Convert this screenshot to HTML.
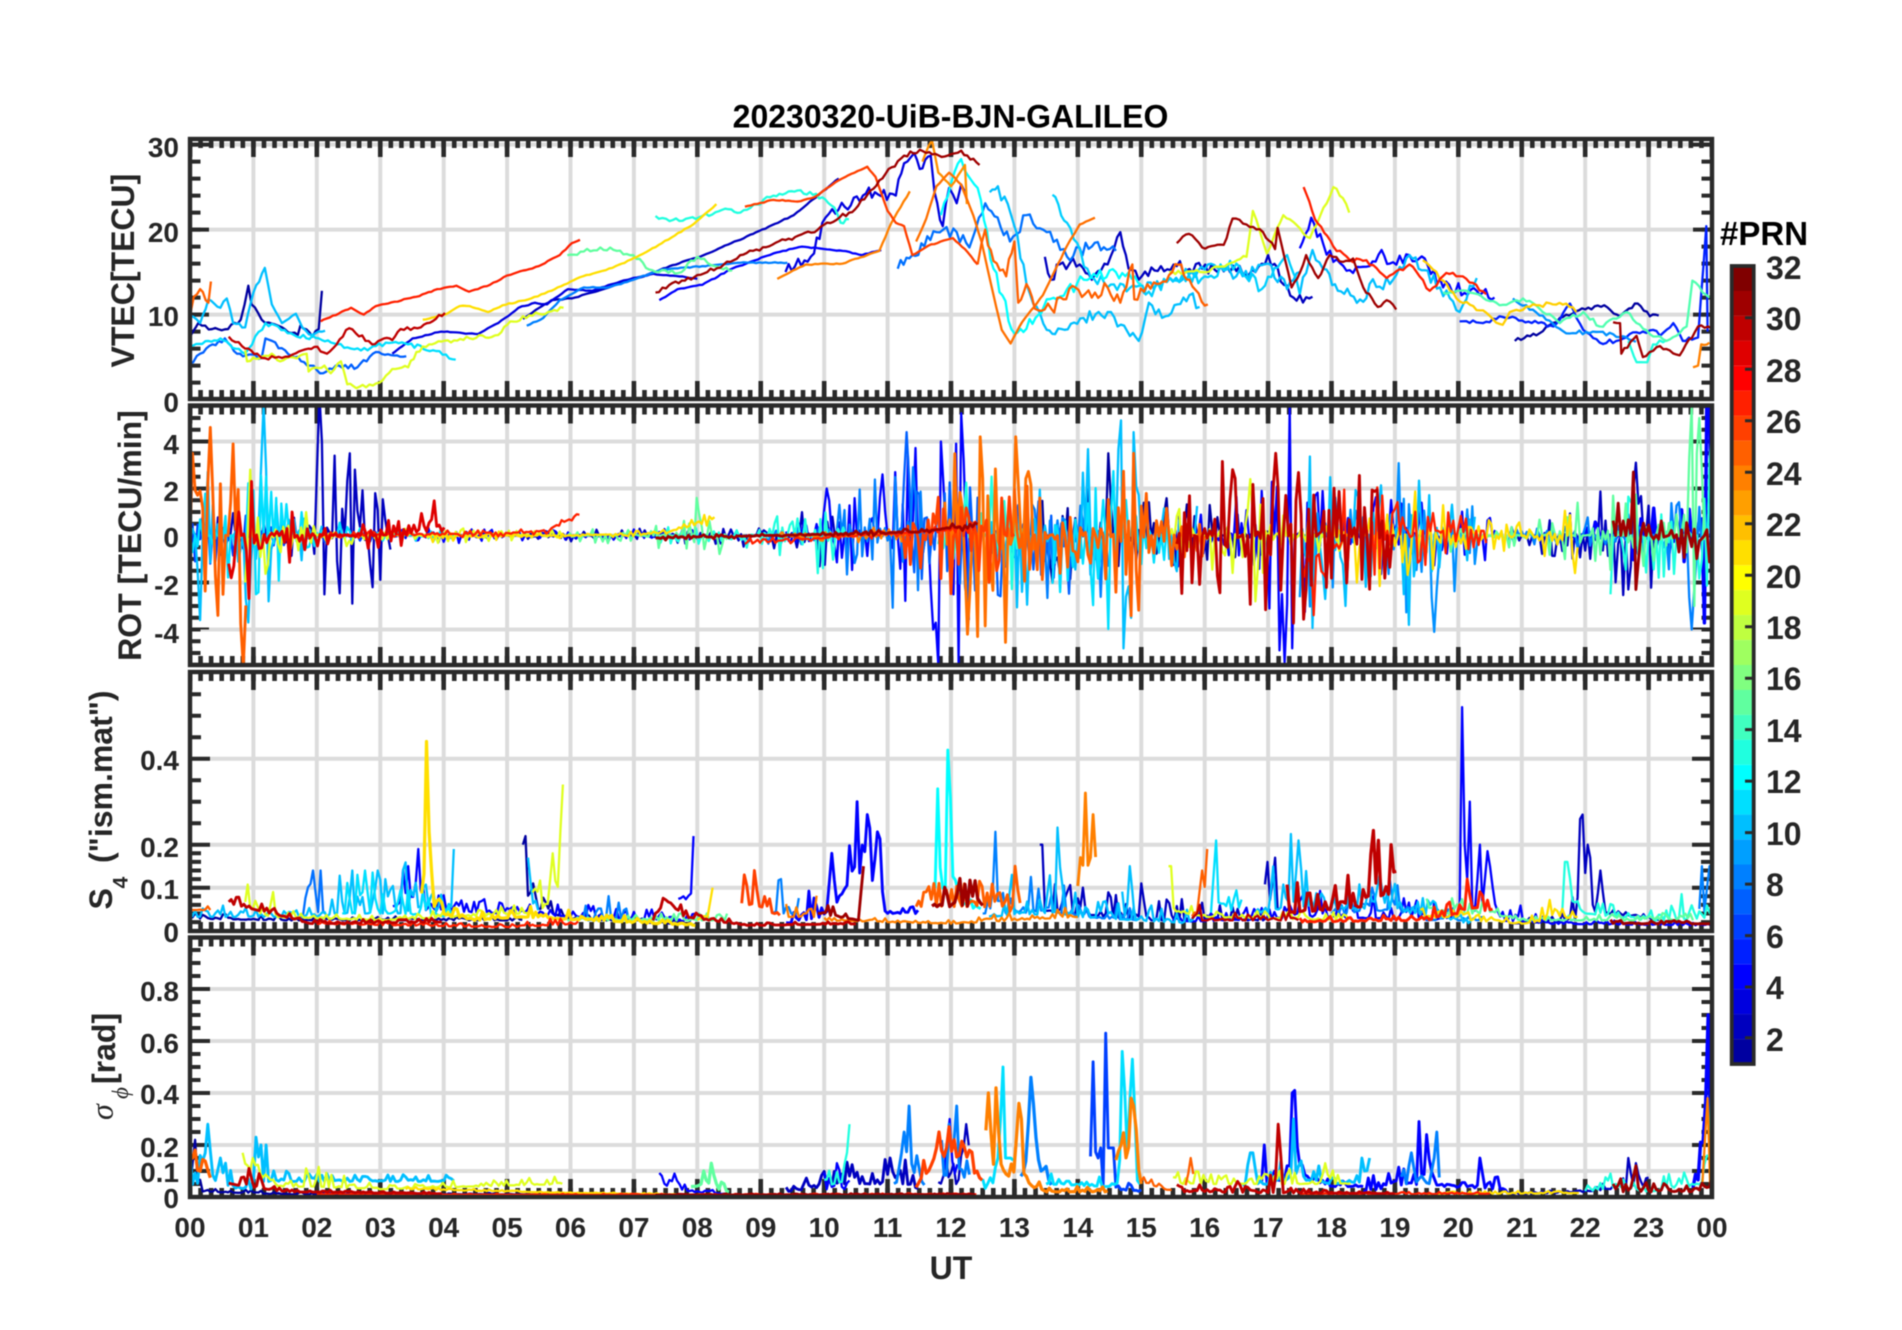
<!DOCTYPE html>
<html><head><meta charset="utf-8"><title>20230320-UiB-BJN-GALILEO</title>
<style>
html,body{margin:0;padding:0;background:#fff;width:1902px;height:1330px;overflow:hidden}
svg{display:block;filter:blur(.45px)}
text{font-family:"Liberation Sans",sans-serif;font-weight:bold;fill:#262626}
.t text,.t{font-size:28px}
.l{font-size:32px}
#v polyline{fill:none;stroke-width:2.3;vector-effect:non-scaling-stroke;stroke-linejoin:round}
.tr{fill:none;stroke-linejoin:round}
.gr{stroke:#dcdcdc;stroke-width:4;fill:none}
.tk{stroke:#2a2a2a;fill:none}
.fr{stroke:#2a2a2a;stroke-width:4.4;fill:none}
</style></head><body>
<svg xmlns="http://www.w3.org/2000/svg" width="1902" height="1330" viewBox="0 0 1902 1330">
<defs>
<clipPath id="c1"><rect x="190" y="139" width="1522" height="260"/></clipPath>
<clipPath id="c2"><rect x="190" y="405.5" width="1522" height="259.5"/></clipPath>
<clipPath id="c3"><rect x="190" y="672" width="1522" height="259"/></clipPath>
<clipPath id="c4"><rect x="190" y="937.5" width="1522" height="259.5"/></clipPath>
</defs>

<!-- grid -->
<g class="gr">
<path d="M253.4 139V399M316.8 139V399M380.3 139V399M443.7 139V399M507.1 139V399M570.5 139V399M633.9 139V399M697.3 139V399M760.8 139V399M824.2 139V399M887.6 139V399M951 139V399M1014.4 139V399M1077.8 139V399M1141.3 139V399M1204.7 139V399M1268.1 139V399M1331.5 139V399M1394.9 139V399M1458.3 139V399M1521.8 139V399M1585.2 139V399M1648.6 139V399"/>
<path d="M253.4 405V665M316.8 405V665M380.3 405V665M443.7 405V665M507.1 405V665M570.5 405V665M633.9 405V665M697.3 405V665M760.8 405V665M824.2 405V665M887.6 405V665M951 405V665M1014.4 405V665M1077.8 405V665M1141.3 405V665M1204.7 405V665M1268.1 405V665M1331.5 405V665M1394.9 405V665M1458.3 405V665M1521.8 405V665M1585.2 405V665M1648.6 405V665"/>
<path d="M253.4 672V931M316.8 672V931M380.3 672V931M443.7 672V931M507.1 672V931M570.5 672V931M633.9 672V931M697.3 672V931M760.8 672V931M824.2 672V931M887.6 672V931M951 672V931M1014.4 672V931M1077.8 672V931M1141.3 672V931M1204.7 672V931M1268.1 672V931M1331.5 672V931M1394.9 672V931M1458.3 672V931M1521.8 672V931M1585.2 672V931M1648.6 672V931"/>
<path d="M253.4 937V1197M316.8 937V1197M380.3 937V1197M443.7 937V1197M507.1 937V1197M570.5 937V1197M633.9 937V1197M697.3 937V1197M760.8 937V1197M824.2 937V1197M887.6 937V1197M951 937V1197M1014.4 937V1197M1077.8 937V1197M1141.3 937V1197M1204.7 937V1197M1268.1 937V1197M1331.5 937V1197M1394.9 937V1197M1458.3 937V1197M1521.8 937V1197M1585.2 937V1197M1648.6 937V1197"/>
<path d="M190 144.6H1712M190 229.6H1712M190 314.6H1712"/>
<path d="M190 441.5H1712M190 488.5H1712M190 535.5H1712M190 582.5H1712M190 629.5H1712"/>
<path d="M190 758.7H1712M190 844.7H1712M190 887.7H1712"/>
<path d="M190 989H1712M190 1041H1712M190 1093H1712M190 1145H1712M190 1171H1712"/>
</g>

<!-- x ticks -->
<g class="tk">
<g stroke-dasharray="4.6 5.9694" stroke-dashoffset="2.3" stroke-width="9">
<path d="M190 143.5H1714M190 394.5H1714M190 410H1714M190 660.5H1714M190 676.5H1714M190 926.5H1714M190 942H1714M190 1192.5H1714"/>
</g>
<g stroke-dasharray="4.6 58.8167" stroke-dashoffset="2.3" stroke-width="18">
<path d="M190 148H1714M190 390H1714M190 414.5H1714M190 656H1714M190 681H1714M190 1188H1714M190 946.5H1714"/>
</g>
<!-- y ticks -->
<g stroke-dasharray="4 13" stroke-dashoffset="2" stroke-width="9">
<path d="M196 399.6V139M1706 399.6V139"/>
</g>
<g stroke-dasharray="4 81" stroke-dashoffset="2" stroke-width="18">
<path d="M200 399.6V139M1702 399.6V139"/>
</g>
<g stroke-dasharray="4 7.75" stroke-dashoffset="2" stroke-width="9">
<path d="M196 664.75V405.5M1706 664.75V405.5"/>
</g>
<g stroke-dasharray="4 43" stroke-dashoffset="2" stroke-width="18">
<path d="M200 629.5V405.5M1702 629.5V405.5"/>
</g>
<g stroke-width="4">
<path d="M192 922.1h9M192 913.5h9M192 904.9h9M192 896.3h9M192 879.1h9M192 870.5h9M192 861.9h9M192 853.3h9M192 823.2h9M192 801.7h9M192 780.2h9M192 737.2h9M192 715.7h9M192 694.2h9"/>
<path d="M1710 922.1h-9M1710 913.5h-9M1710 904.9h-9M1710 896.3h-9M1710 879.1h-9M1710 870.5h-9M1710 861.9h-9M1710 853.3h-9M1710 823.2h-9M1710 801.7h-9M1710 780.2h-9M1710 737.2h-9M1710 715.7h-9M1710 694.2h-9"/>
<path d="M192 887.7h18M192 844.7h18M192 758.7h18M1710 887.7h-18M1710 844.7h-18M1710 758.7h-18"/>
<path d="M192 989h18M192 1041h18M192 1093h18M192 1145h18M192 1171h18M1710 989h-18M1710 1041h-18M1710 1093h-18M1710 1145h-18M1710 1171h-18"/>
</g>
<g stroke-dasharray="4 9" stroke-dashoffset="2" stroke-width="9">
<path d="M196 1197V937.5M1706 1197V937.5"/>
</g>
</g>

<!-- VTEC traces (hours, TECU) -->
<g clip-path="url(#c1)">
<g id="v" transform="translate(190,399.6) scale(63.417,-8.5)">
<polyline class="a" stroke="#0000a0" points="0,7.4 .13,9 .35,8.3 .6,8.3 .8,9.4 .92,13.4 .97,11.2 1.13,9.4 1.45,8.5 1.7,7.6 1.74,8.7 1.93,7.4 2.03,8.3 2.08,12.8"/>
<polyline class="b" stroke="#0000bf" points="5.25,9.5 5.7,11.7 6.02,11.9 6.34,12.6 7.11,14.4 7.76,16.2 8.04,16.8 8.88,19.5 9.52,21.7 10.23,26"/>
<polyline class="a" stroke="#0000a0" points="20.89,6.9 21.28,7.8 21.6,9.6 21.9,10.5 22.3,11.1 22.55,9.8 22.83,11.3 23.02,9.8 23.16,9.9"/>
<polyline class="c" stroke="#0000bf" points="13.48,16.8 13.58,14.1 13.71,15.9 14.03,15.9 14.22,14.1 14.47,15.9 14.67,19.7 14.8,15.4 14.96,14.1 15.31,15.7 15.56,15.7 15.96,15.4 16.4,15 16.8,15 17,17 17.25,13.5 17.4,12 17.7,12.1"/>
<polyline class="b" stroke="#0000df" points="3.19,5.4 3.51,7.2 3.96,8 4.54,7.7 4.86,9 5.18,10.8 5.44,11.4 5.63,11.2 5.96,13 6.34,12.8 6.79,13.9 7.31,14.8 7.82,14.4 8,14.2"/>
<polyline class="c" stroke="#0000df" points="9.39,15 9.84,17.2 9.97,20.8 10.23,22.4 10.61,24 10.8,24.4 11.13,24 11.26,27.8 11.42,29 11.55,27.2 11.68,28.7 11.74,24.4 11.87,20.4 11.97,24.9 12.09,23.1 12.16,25.3 12.25,23.5"/>
<polyline class="b" stroke="#0000ff" points="7.4,11.7 7.69,13 8.08,13.5 8.52,15.3 9.2,17.2 9.65,18 10.29,17.5 10.6,17 10.9,17.6"/>
<polyline class="c" stroke="#0000ff" points="17.5,17.8 17.68,21.4 17.87,18.3 18.03,16.2 18.34,14.9 18.6,15.7 18.79,17.6 18.92,16 19.23,17 19.47,16.6 19.76,13.2 20.29,12.8 20.57,12"/>
<polyline class="a" stroke="#0020ff" points="20.02,9.2 20.39,9 20.65,9.8 21.26,9 21.5,8.6 21.76,11.3 21.97,8.2 22.23,6.7 22.49,6.9 22.7,7.7 23.07,8.2 23.18,7.5 23.39,9 23.54,6.9 23.78,7.3 23.91,20.4 23.93,8"/>
<polyline class="a" stroke="#0060ff" points="0,4.2 .16,5.4 .55,7.2 .74,5.4 1.13,4.9 1.19,7.2 1.5,5.8 1.9,4 2.1,3.1 2.35,4 2.64,3.8 2.93,5.6 3.41,5.1"/>
<polyline class="c" stroke="#0070ff" points="11.16,15.4 11.39,17 11.77,19.7 12.09,19.7 12.29,17.9 12.54,23.1 12.93,18.6 13.19,21.7 13.51,19.7 13.83,16.8 14.22,18 14.6,17.5"/>
<polyline class="b" stroke="#0080ff" points="5.31,8.7 5.57,9.6 5.83,11.7 6.21,13.2 6.6,13.2 6.99,14.1 7.44,15.3 8.08,15.7 8.68,16.1 9.42,16.1"/>
<polyline class="a" stroke="#0090ff" points="20.86,11.9 21.28,9.9 21.7,7.8 22.12,8 22.44,7.7 22.8,6.8"/>
<polyline class="a" stroke="#00bfff" points="0,9.9 .16,9 .29,11.8 .48,10.8 .58,11.9 .68,9 .87,8.5 1,12.6 1.18,15.5 1.29,11.2 1.45,9 1.67,10.1 1.77,8.5 1.93,7.6 2.13,8.1"/>
<polyline class="c" stroke="#00bfff" points="12.61,24.4 12.74,25.1 13,20.4 13.19,13.6 13.51,8.2 13.64,7.7 14.09,9.6 14.47,10.3 14.73,8.7 14.96,6.9 15.12,11.4 15.38,9.8 15.76,12.3 15.92,10.9"/>
<polyline class="c" stroke="#00bfff" points="15,13 15.4,14 15.8,15 16.2,15.5 16.6,14.5 17,16 17.3,13 17.5,15"/>
<polyline class="c" stroke="#00bfff" points="17.5,12.4 17.7,17.6 17.92,15.3 18.1,12.8 18.5,11.5 18.6,13.6 18.92,13.6 19.23,17 19.71,13.2 20.02,10.3 20.29,14.3"/>
<polyline class="c" stroke="#00cfff" points="13.6,24.1 13.83,20.8 14.15,15.4 14.47,13.2 15.12,12.7 15.5,14 16,14.5 16.5,16 16.9,13 17.3,17 17.5,12.4"/>
<polyline class="a" stroke="#00dfff" points="0,6.3 .29,6.9 .48,7.2 .87,5.4 1.19,9 1.64,7.6 2.03,7.2 2.32,6.5 2.54,6 2.8,5.8 2.93,6.3 3.19,6.7 3.44,6.5 3.83,5.8 4.19,4.7"/>
<polyline class="c" stroke="#00ffff" points="11.84,21.7 12.16,28.3 12.42,24.9 12.67,15.4 13,7.8 13.38,10 13.51,11.8 13.83,13 14.2,14.3 14.6,15 15,13.5"/>
<polyline class="a" stroke="#20ffdf" points="7.34,21.6 7.56,21 8.08,21.6 8.49,22.4 8.68,22 9.2,24 9.58,24.6 9.97,23.8 10.16,22.6 10.26,20.8 10.39,21.2"/>
<polyline class="a" stroke="#20ffdf" points="22.68,6.9 22.81,4.4 22.98,4.4 23.07,6.5 23.28,7"/>
<polyline class="a" stroke="#60ff9f" points="5.95,17 6.47,17.9 6.73,17.5 6.99,17 7.24,15.3 7.7,14.9 8,16.8 8.27,15.7 8.55,15.2"/>
<polyline class="a" stroke="#50ffb0" points="19.76,12.6 20.13,12.8 20.65,11.1 21.02,11.9 21.28,10.7 21.6,9 21.97,10.3 22.23,8.6 22.65,10.3 23.02,7.7 23.28,6.9 23.6,8.6 23.69,14 23.96,12"/>
<polyline class="a" stroke="#dfff20" points=".87,5.8 .9,4.5 1.29,5.4 1.42,4.5 1.84,5.4 1.87,3.3 2.12,4 2.22,3.1 2.38,4.5 2.48,1.8 2.67,1.5 2.99,2 3.19,3.6 3.44,3.8 3.57,5.6 3.77,6.5 4.41,7.2 4.86,7.6 5.05,9.2 5.5,10.1 5.89,10.8"/>
<polyline class="a" stroke="#dfff20" points="15.44,15 16.02,15 16.66,16.8 16.76,22.2 16.98,17.2 17.24,21.7 17.66,19 17.82,21.6 18.03,25 18.18,23.7 18.28,22"/>
<polyline class="b" stroke="#ffdf00" points="3.67,9.4 4.02,10 4.25,11 4.41,11 4.7,10.3 4.93,11.1 5.38,11.9 5.7,12.8 6.15,14.4 6.66,15.5 7.05,16.8 7.44,18.4 7.95,20.7 8.3,23"/>
<polyline class="a" stroke="#ffcf00" points="19.44,16.4 19.76,14 19.97,11.9 20.34,10.5 20.7,8.8 20.81,10.3 21.23,11.1 21.7,11.3 21.86,10.3"/>
<polyline class="a" stroke="#ff9000" points="11.55,28 11.7,30.5 11.8,26.7 12,25.1 12.22,27.6 12.25,23"/>
<polyline class="b" stroke="#ff8000" points="9.26,14.2 9.71,15.9 10.29,16 10.87,17.5 11.06,20.8 11.35,24.5"/>
<polyline class="b" stroke="#ff7000" points="11.45,18.6 11.61,21.3 11.77,25.1 11.97,26.7 12.16,25.3 12.35,21.7 12.48,18.6 12.67,12.3 12.8,8.2 12.94,6.6 13.12,9.1 13.45,12.3 13.83,18.1 14.03,20.6 14.27,21.4"/>
<polyline class="a" stroke="#ff8000" points="23.7,3.8 23.78,4 23.83,6.5 23.96,6.7"/>
<polyline class="c" stroke="#ff6000" points="12.42,15.9 12.54,20 12.67,16.3 12.87,14.5 13,18.6 13.06,11.4 13.19,13.6 13.32,10.7 13.58,10.7 13.77,11.8 13.96,13.2 14.22,12 14.47,13.2 14.67,11.4 14.86,15.9 14.89,11.8 15.25,13.6 15.63,15.9 15.76,14.1 16.05,11.2"/>
<polyline class="a" stroke="#ff6000" points="0,9.9 .06,12.1 .16,13 .29,11.4 .33,13.9"/>
<polyline class="b" stroke="#ff4000" points="8.75,22.7 9.2,23.5 9.58,23.3 9.84,23.8 10.23,25.8 10.68,27.4 10.81,26.2 11,22.2 11.13,20.8 11.26,20.4 11.39,17 11.64,18.1 12.03,19 12.22,17.7 12.42,15.9"/>
<polyline class="b" stroke="#ff2000" points="2.06,9.2 2.54,10.8 2.74,10 2.93,11 3.57,12.1 3.9,13 4.2,13.4 4.4,12.7 4.73,13.5 5,14.6 5.5,15.7 5.83,17 6.02,18.4 6.15,18.8"/>
<polyline class="a" stroke="#ff2000" points="17.56,25 17.74,21.2 18.03,18 18.29,16.4 18.55,16.4 18.87,14.3 19.23,15.9 19.55,12.8 19.81,14.9 20.07,14.5 20.44,12.4"/>
<polyline class="a" stroke="#bf0000" points=".61,7.4 .87,6 1.06,5.4 1.13,4.9 1.45,4.9 1.77,5.8 1.96,6.2 2.16,5.4 2.51,8.4 2.87,6.5 3.06,7.2 3.19,7 3.32,8.3 3.64,8.5 4.02,10.2"/>
<polyline class="a" stroke="#9f0000" points="7.34,12.6 7.56,13.5 7.95,14.4 8.52,16.2 8.88,17.5 9.9,20 10.49,22.4 10.87,25.8 11.26,28.7 11.51,29.4 11.9,28.6 12.16,29.3 12.45,27.6"/>
<polyline class="a" stroke="#9f0000" points="15.56,18.4 15.75,19.5 15.96,17.9 16.3,18.2 16.44,21.3 16.66,20.6 16.92,19.7 17.11,17.7 17.15,20.2 17.37,13.2 17.5,14.9 17.6,17 17.79,14.3 17.97,17 18.18,16.2 18.34,16.6 18.5,13.2 18.73,10.9 18.87,11.7 19.02,10.6"/>
<polyline class="a" stroke="#9f0000" points="22.44,9.1 22.55,9 22.57,5.4 22.81,7.5 22.91,5 23.18,6.3 23.49,5.2 23.78,8.6 23.99,8.4"/>
</g></g>

<g id="p2" clip-path="url(#c2)"></g>
<g id="p3" clip-path="url(#c3)"></g>
<g id="p4" clip-path="url(#c4)"></g>

<!-- frames -->
<rect class="fr" x="190" y="139" width="1522" height="260"/>
<rect class="fr" x="190" y="405.5" width="1522" height="259.5"/>
<rect class="fr" x="190" y="672" width="1522" height="259"/>
<rect class="fr" x="190" y="937.5" width="1522" height="259.5"/>

<!-- y tick labels -->
<g class="t" text-anchor="end">
<text x="179" y="157">30</text><text x="179" y="242">20</text><text x="179" y="326">10</text><text x="179" y="412">0</text>
<text x="179" y="454">4</text><text x="179" y="501">2</text><text x="179" y="547">0</text><text x="179" y="595">-2</text><text x="179" y="643">-4</text>
<text x="179" y="770">0.4</text><text x="179" y="857">0.2</text><text x="179" y="899">0.1</text><text x="179" y="942">0</text>
<text x="179" y="1001">0.8</text><text x="179" y="1053">0.6</text><text x="179" y="1104">0.4</text><text x="179" y="1157">0.2</text><text x="179" y="1182">0.1</text><text x="179" y="1208">0</text>
</g>
<!-- x tick labels -->
<g class="t" text-anchor="middle">
<text x="190" y="1237">00</text><text x="253.4" y="1237">01</text><text x="316.8" y="1237">02</text><text x="380.3" y="1237">03</text><text x="443.7" y="1237">04</text><text x="507.1" y="1237">05</text><text x="570.5" y="1237">06</text><text x="633.9" y="1237">07</text><text x="697.3" y="1237">08</text><text x="760.8" y="1237">09</text><text x="824.2" y="1237">10</text><text x="887.6" y="1237">11</text><text x="951" y="1237">12</text><text x="1014.4" y="1237">13</text><text x="1077.8" y="1237">14</text><text x="1141.3" y="1237">15</text><text x="1204.7" y="1237">16</text><text x="1268.1" y="1237">17</text><text x="1331.5" y="1237">18</text><text x="1394.9" y="1237">19</text><text x="1458.3" y="1237">20</text><text x="1521.8" y="1237">21</text><text x="1585.2" y="1237">22</text><text x="1648.6" y="1237">23</text><text x="1712" y="1237">00</text>
</g>
<text class="l" x="951" y="1279" text-anchor="middle">UT</text>
<text x="950.5" y="127.5" text-anchor="middle" font-size="32" style="fill:#000">20230320-UiB-BJN-GALILEO</text>

<!-- axis labels -->
<text class="l" transform="translate(134,270.6) rotate(-90)" text-anchor="middle">VTEC[TECU]</text>
<text class="l" transform="translate(141,535.5) rotate(-90)" text-anchor="middle">ROT [TECU/min]</text>
<text class="l" transform="translate(112,909.5) rotate(-90)">S</text>
<text transform="translate(127.5,888.5) rotate(-90)" font-size="21">4</text>
<text class="l" transform="translate(112,863) rotate(-90)">("ism.mat")</text>
<text class="l" transform="translate(115,1084) rotate(-90)">[rad]</text>
<text transform="translate(112.5,1120) rotate(-90)" font-size="32" style='font-family:"Liberation Serif",serif;font-style:italic;font-weight:normal'>σ</text>
<text transform="translate(128,1099) rotate(-90)" font-size="23" style='font-family:"Liberation Serif",serif;font-style:italic;font-weight:normal'>ϕ</text>

<!-- colorbar -->
<g>
<rect x="1731" y="266.0" width="23" height="25" fill="#800000"/><rect x="1731" y="290.9" width="23" height="25" fill="#9f0000"/><rect x="1731" y="315.9" width="23" height="25" fill="#bf0000"/><rect x="1731" y="340.8" width="23" height="25" fill="#df0000"/><rect x="1731" y="365.8" width="23" height="25" fill="#ff0000"/><rect x="1731" y="390.7" width="23" height="25" fill="#ff2000"/><rect x="1731" y="415.6" width="23" height="25" fill="#ff4000"/><rect x="1731" y="440.6" width="23" height="25" fill="#ff6000"/><rect x="1731" y="465.5" width="23" height="25" fill="#ff8000"/><rect x="1731" y="490.4" width="23" height="25" fill="#ff9f00"/><rect x="1731" y="515.4" width="23" height="25" fill="#ffbf00"/><rect x="1731" y="540.3" width="23" height="25" fill="#ffdf00"/><rect x="1731" y="565.3" width="23" height="25" fill="#ffff00"/><rect x="1731" y="590.2" width="23" height="25" fill="#dfff20"/><rect x="1731" y="615.1" width="23" height="25" fill="#bfff40"/><rect x="1731" y="640.1" width="23" height="25" fill="#9fff60"/><rect x="1731" y="665" width="23" height="25" fill="#80ff80"/><rect x="1731" y="689.9" width="23" height="25" fill="#60ff9f"/><rect x="1731" y="714.9" width="23" height="25" fill="#40ffbf"/><rect x="1731" y="739.8" width="23" height="25" fill="#20ffdf"/><rect x="1731" y="764.8" width="23" height="25" fill="#00ffff"/><rect x="1731" y="789.7" width="23" height="25" fill="#00dfff"/><rect x="1731" y="814.6" width="23" height="25" fill="#00bfff"/><rect x="1731" y="839.6" width="23" height="25" fill="#009fff"/><rect x="1731" y="864.5" width="23" height="25" fill="#0080ff"/><rect x="1731" y="889.4" width="23" height="25" fill="#0060ff"/><rect x="1731" y="914.4" width="23" height="25" fill="#0040ff"/><rect x="1731" y="939.3" width="23" height="25" fill="#0020ff"/><rect x="1731" y="964.3" width="23" height="25" fill="#0000ff"/><rect x="1731" y="989.2" width="23" height="25" fill="#0000df"/><rect x="1731" y="1014.1" width="23" height="25" fill="#0000bf"/><rect x="1731" y="1039.1" width="23" height="25" fill="#0000a0"/>
<path class="tk" stroke-width="3" d="M1745 317.8h8M1745 369.3h8M1745 420.8h8M1745 472.2h8M1745 523.7h8M1745 575.2h8M1745 626.7h8M1745 678.2h8M1745 729.6h8M1745 781.1h8M1745 832.6h8M1745 884.1h8M1745 935.6h8M1745 987h8M1745 1037.8h8"/>
<rect x="1731.7" y="266" width="22" height="798" fill="none" stroke="#2a2a2a" stroke-width="3.8"/>
</g>
<g font-size="32">
<text x="1766" y="279" font-size="32">32</text><text x="1766" y="330" font-size="32">30</text><text x="1766" y="382" font-size="32">28</text><text x="1766" y="433" font-size="32">26</text><text x="1766" y="485" font-size="32">24</text><text x="1766" y="536" font-size="32">22</text><text x="1766" y="588" font-size="32">20</text><text x="1766" y="639" font-size="32">18</text><text x="1766" y="690" font-size="32">16</text><text x="1766" y="742" font-size="32">14</text><text x="1766" y="793" font-size="32">12</text><text x="1766" y="845" font-size="32">10</text><text x="1766" y="896" font-size="32">8</text><text x="1766" y="948" font-size="32">6</text><text x="1766" y="999" font-size="32">4</text><text x="1766" y="1051" font-size="32">2</text>
</g>
<text x="1720" y="245" font-size="33" style="fill:#000">#PRN</text>
</svg>
<script>
(function(){
var seed=20230320;function R(){seed=(seed*1664525+1013904223)>>>0;return seed/4294967296;}
var NS="http://www.w3.org/2000/svg";
function X(t){return 190+t*63.417;}
function K(k,t,i){var n=k.length;if(t<=k[0][0])return k[0][i];for(var j=0;j<n-1;j++){if(t<=k[j+1][0]){var f=(t-k[j][0])/(k[j+1][0]-k[j][0]);return k[j][i]+f*(k[j+1][i]-k[j][i]);}}return k[n-1][i];}
function add(p,c,pts,w){var e=document.createElementNS(NS,"polyline");e.setAttribute("points",pts.join(" "));e.setAttribute("stroke",c);e.setAttribute("stroke-width",(w||2)*1.15);e.setAttribute("class","tr");document.getElementById(p).appendChild(e);}
var dt=.04;
function spikeval(sp,t,v,sh){if(!sp)return v;for(var i=0;i<sp.length;i++){var d=Math.abs(t-sp[i][0]);if(d<dt/2)return sp[i][1];if(d<dt*1.5&&R()<.5)v=sp[i][1]*.55+v*.3;else if(sh&&d<dt*3&&R()<.6)v=Math.max(v,sp[i][1]*.3);}return v;}
/* ROT: knots [t,amp,bias] */
function r(c,k,sp,w){var pts=[],s=1,a0=k[0][0],a1=k[k.length-1][0];for(var t=a0;t<=a1;t+=dt){var a=K(k,t,1),b=k[0].length>2?K(k,t,2):0,u=R();if(R()<.75)s=-s;var v=b+a*s*Math.pow(u,2.7);v=spikeval(sp,t,v);pts.push(X(t).toFixed(1)+","+(535.5-v*23.5).toFixed(1));}add("p2",c,pts,w);}
/* S4 & sigma: knots [t,base,amp] */
function q(p,sc,y0,c,k,sp,w,f,sh){var pts=[],a0=k[0][0],a1=k[k.length-1][0];for(var t=a0;t<=a1;t+=dt){var b=K(k,t,1)*f,a=K(k,t,2),u=R();var v=b+a*u*u*u;v=spikeval(sp,t,v,sh);pts.push(X(t).toFixed(1)+","+(y0-v*sc).toFixed(1));}add(p,c,pts,w);}
function s(c,k,sp,w){q("p3",430,930.7,c,k,sp,w,.8,1);}
function g(c,k,sp,w){q("p4",260,1197,c,k,sp,w,1,1);}

/* roughen VTEC lines */
var lines=document.querySelectorAll("#v polyline");
for(var i=0;i<lines.length;i++){var el=lines[i],cl=el.getAttribute("class"),amp=cl=="c"?1.5:(cl=="a"?.5:.12),raw=el.getAttribute("points").trim().split(/\s+/).map(function(x){return x.split(",").map(Number);}),out=[];
for(var j=0;j<raw.length-1;j++){var p0=raw[j],p1=raw[j+1],n=Math.max(1,Math.round((p1[0]-p0[0])/.05));for(var m=0;m<n;m++){var f=m/n,x=p0[0]+f*(p1[0]-p0[0]),y=p0[1]+f*(p1[1]-p0[1]);if(m>0)y+=(R()-.5)*amp;out.push(x.toFixed(3)+","+y.toFixed(2));}}
out.push(raw[raw.length-1].join(","));el.setAttribute("points",out.join(" "));}

/* ---- ROT ---- */
r("#0000bf",[[0,1],[1,1],[1.9,.8],[2,3],[2.9,3],[3.2,.4]],[[2.06,6],[2.1,4],[2.14,-2.5],[2.27,3.4],[2.3,-2.5],[2.54,3.5],[2.58,-2.9],[2.62,2.8],[2.91,1.8],[2.87,-2.2]]);
r("#0000bf",[[5.25,.25],[7.5,.3],[9.3,.6],[10,1.5],[10.23,1]]);
r("#0000a0",[[13.4,1.5],[14.5,2.5],[15,2],[15.5,1.5],[16,1.5],[17,1]],[[13.6,-2],[14.49,3.5]]);
r("#0000bf",[[20.8,.5],[21.6,1],[22.3,2.5],[22.7,3],[23.16,2]],[[22.8,3.1],[22.68,-2.3]]);
r("#0000ff",[[3.2,.5],[5,.2],[8,.3]]);
r("#0000ff",[[9.4,.4],[9.9,1.5],[10.5,2],[11.2,3],[11.5,4],[11.8,5],[12.3,5]],[[11.84,4],[11.72,-4],[11.8,-5.5],[12.11,-5.5],[12.16,5.2],[12.47,-4.9],[12.49,5.5],[10.05,2],[10.9,2.6]]);
r("#0000ff",[[15.5,1.5],[16.5,2],[17.2,5],[17.8,3],[18.5,2.5],[19.5,1.5],[20.6,1]],[[17.34,5.5],[17.27,-5.4],[17.37,-4.8]]);
r("#0000ff",[[21.8,.6],[23,1.2],[23.85,1.5],[24,3]],[[23.9,6],[23.92,-6],[23.95,6],[23.97,-6]],3);
r("#0040ff",[[0,2],[.5,1],[1,.8],[2,.3],[3.4,.3]]);
r("#0060ff",[[11.1,1.5],[12,3],[13,3],[14,2.5]],[[11.28,4.4]]);
r("#0080ff",[[9,.4],[10.2,1.5],[11,3],[11.4,3.5],[11.6,2.5]]);
r("#0080ff",[[12.8,3],[13.3,3.5],[14,3],[14.5,3]]);
r("#0090ff",[[17.5,3],[19.5,3.5],[20.3,1.5]],[[19.63,-4.1],[19.6,2.7]]);
r("#0080ff",[[20.8,.5],[23,1],[24,3]],[[23.69,-4]]);
r("#00bfff",[[0,2.5],[.5,3],[1,5],[1.3,3],[2.1,.8]],[[.16,-3.6],[.93,-3.7],[1.16,5.6],[1.24,-2.8],[1.2,2.8]]);
r("#00bfff",[[12.6,3],[13,3.5],[14,4],[14.5,5],[15,4],[15.9,1.5]],[[14.67,4.9],[14.86,4.4],[14.7,-4.8],[14.85,-3.5]]);
r("#00bfff",[[17.5,5],[18,3.5],[18.5,3],[19.5,2.5],[20.29,1]],[[19.2,-3.8],[17.9,-2.7],[18.2,-3]]);
r("#00dfff",[[0,1.5],[1,3],[2,.6],[4.2,.3]]);
r("#00dfff",[[13.6,3],[14.5,4.5],[15,2],[15.5,1]]);
r("#20ffdf",[[11.8,1.5],[12.5,3],[13.2,2]]);
r("#20ffdf",[[7.34,.3],[9.5,1],[10.39,2.5]],[[10.5,2.3]]);
r("#20ffdf",[[22.4,1.5],[23,2],[23.6,2],[24,3]],[[22.41,-2.5],[23.98,4.4]]);
r("#60ff9f",[[5.95,.3],[7,.4],[8,1],[8.5,.8]],[[8,1.6],[8.55,-1.4]]);
r("#60ff9f",[[19.76,.8],[21,.5],[21.97,1.5],[22.6,2],[23.6,1],[24,1.5]],[[23.69,5.5],[23.72,-3],[23.76,3.5],[23.8,5]]);
r("#dfff20",[[.87,3],[1.3,2.5],[2,.8],[3,.4],[5.9,.2]],[[.95,2.8],[.88,-2]]);
r("#dfff20",[[15.44,1.5],[16.5,2],[17,2.5],[18.3,.8]],[[16.81,-2.8],[16.7,2.4]]);
r("#ffdf00",[[3.67,.3,0],[6,.1,0],[7.5,.15,.1],[8.3,.3,.8]]);
r("#ffdf00",[[18,2,0],[19.44,2.5,0],[20,.8,0],[21.2,.6,0],[21.7,2,0],[21.9,2,0]],[[21.92,2.2],[21.83,-1.6],[18.4,-2]]);
r("#ff8000",[[9.26,.2],[10.5,.3],[11.35,.6]]);
r("#ff6000",[[0,4],[.9,2.5]],[[.05,3.5],[.15,1.9],[.32,4.6],[.42,-3.4],[.47,2.2],[.7,3.9],[.66,3.8],[.86,-5.6],[.5,-2.5]],2.5);
r("#ff7000",[[11.9,4],[12.5,4.5],[13,5],[13.3,2.5]],[[12.47,4.2],[12.26,-4.2],[12.42,-4.3],[13,4.2],[13.03,-5.6]],2.5);
r("#ff6000",[[13,3.2],[13.5,2],[14,1.5],[14.5,2],[14.9,4.2],[15.3,1.6],[16,1.2]],[[14.87,3.5],[14.89,-4.6]],2.5);
r("#ff4000",[[11.2,1.2],[11.5,3],[12,3.6],[12.5,3.2],[13,3]],null,2.5);
r("#ff2000",[[2.06,.15,0],[5,.15,.1],[5.6,.2,.2],[6.15,.2,.9]]);
r("#ff2000",[[8.75,.2,-.3],[10,.1,-.1],[12.4,.4,.3]]);
r("#ff2000",[[17.56,2.5,-1.2],[18.03,2.5,-.5],[18.5,2,.2],[19.5,1.5,.2],[20.44,.8,.2]]);
r("#df0000",[[.61,3,0],[1,3,0],[1.5,1.4,0],[2,.8,0],[3,.7,0],[3.6,.5,.2],[3.8,1.2,.6],[4.02,.4,.3]],[[.65,-1.8]],2.5);
r("#9f0000",[[7.34,.1,-.1],[10,.1,.05],[11.5,.15,.15],[12.45,.3,.5]],null,2.5);
r("#bf0000",[[15.56,3],[16.5,3.5],[17.3,4],[18.5,2.6],[19.02,1.8]],[[16.44,2.8],[17.13,3.5]],2.5);
r("#9f0000",[[22.44,1.4],[22.7,3.5],[23.18,1.2],[23.7,.9],[24,2]],[[22.75,2.7],[22.8,-2.3]],2.5);

/* ---- S4 ---- */
s("#0000a0",[[0,.035,.02],[1.5,.03,.01],[5.25,.03,.01]]);
s("#0000a0",[[5.25,.12,.1],[5.5,.06,.05],[6,.035,.02],[7.5,.02,.01],[8,.015,.01]],[[5.3,.22],[5.27,.2],[5.43,.11]]);
s("#0000bf",[[13.4,.06,.08],[15,.03,.05],[15.1,.03,.08],[17,.03,.02]],[[15.0,.11],[13.42,.2]]);
s("#0000bf",[[16.95,.07,.1],[17.2,.05,.05]],[[16.98,.16],[17.1,.17]]);
s("#0000bf",[[20.8,.02,.01],[21.85,.03,.02],[22.3,.05,.02],[23.2,.03,.02]],[[21.9,.26],[21.97,.27],[22.02,.2],[22.06,.17],[22.25,.14]]);
s("#0000ff",[[3.2,.07,.08],[3.55,.1,.09],[3.7,.06,.05],[8,.025,.02]],[[3.6,.19],[3.45,.15]]);
s("#0000ff",[[7.7,.06,.1],[7.95,.12,.1]],[[7.93,.22],[7.98,.2]]);
s("#0000ff",[[9.4,.02,.02],[9.95,.04,.1],[10.3,.1,.12],[10.4,.15,.15],[10.9,.14,.15],[10.95,.05,.01],[11.5,.05,.02]],[[10.13,.18],[10.53,.3],[10.69,.27],[10.82,.23]],2.5);
s("#0000ff",[[15.5,.025,.03],[18,.04,.07],[19.5,.03,.05],[20.05,.04,.06],[20.6,.03,.06],[21.5,.02,.01],[24,.015,.01]],[[20.06,.52],[20.1,.2],[20.17,.3],[20.35,.2],[20.47,.185],[20.5,.15]]);
s("#0070ff",[[1.7,.03,.02],[1.85,.05,.08],[2.15,.04,.03]],[[1.95,.14],[2.07,.14]]);
s("#0080ff",[[6.2,.03,.06],[7,.03,.06]]);
s("#0080ff",[[9.2,.05,.09],[9.6,.05,.07]],[[9.32,.12]]);
s("#0080ff",[[12.5,.05,.06],[13.1,.05,.1],[13.5,.06,.09],[14,.04,.05],[15,.03,.03]],[[12.69,.23]]);
s("#0080ff",[[18,.05,.07],[19,.06,.08],[19.5,.03,.03],[20.4,.03,.03]]);
s("#0080ff",[[23.8,.06,.05],[24,.05,.04]],[[23.85,.15],[23.97,.15]]);
s("#00bfff",[[0,.04,.03],[2.2,.04,.02],[2.25,.05,.1],[3.4,.05,.12],[3.6,.06,.07],[4.2,.05,.03]],[[2.57,.14],[2.95,.14],[3.08,.12],[4.15,.19]]);
s("#00bfff",[[5.33,.1,.07],[5.5,.05,.02]],[[5.35,.17]]);
s("#00bfff",[[12.6,.04,.05],[13.7,.05,.1],[14,.04,.06],[15.9,.02,.03]],[[13.66,.24],[12.95,.13]]);
s("#00bfff",[[14.7,.04,.06],[14.9,.03,.03]],[[14.83,.15]]);
s("#00bfff",[[16.8,.04,.06],[17.3,.07,.15],[17.6,.07,.1],[18.5,.06,.07],[18.7,.07,.08],[20.2,.02,.01]],[[17.35,.225],[17.47,.21]]);
s("#00dfff",[[2.4,.05,.1],[3.2,.05,.1],[4.2,.04,.02]],[[2.75,.14],[2.65,.13]]);
s("#00dfff",[[16.1,.04,.03],[16.6,.07,.05]],[[16.19,.21]]);
s("#00ffff",[[11.75,.09,.1],[12.1,.09,.05],[12.5,.05,.02]],[[11.79,.33],[11.93,.42],[12,.31]],2.5);
s("#20ffdf",[[21.6,.05,.03],[21.8,.08,.06],[22,.05,.04],[23,.03,.02],[23.5,.03,.07],[24,.04,.03]],[[21.7,.16]]);
s("#60ff9f",[[5.95,.03,.01],[8,.03,.02],[8.5,.03,.02]]);
s("#60ff9f",[[19.5,.05,.04],[20.5,.05,.03],[21,.03,.01],[23.7,.03,.02]]);
s("#dfff20",[[.87,.06,.04],[1.3,.04,.02],[3,.03,.01],[5.4,.05,.03]],[[.93,.17],[1.3,.09]]);
s("#dfff20",[[5.4,.06,.08],[5.9,.07,.1]],[[5.9,.34],[5.72,.18]]);
s("#dfff20",[[15.43,.06,.03],[16,.04,.02],[18.3,.03,.03]],[[15.45,.15]]);
s("#ffdf00",[[3.65,.1,.05],[3.95,.05,.03],[4.5,.03,.02],[5.2,.04,.03],[8,.015,.005]],[[3.67,.46],[3.72,.44],[3.78,.23],[3.83,.16]],2.8);
s("#ffdf00",[[8,.03,.03],[8.25,.03,.04]],[[8.22,.1]]);
s("#ffdf00",[[19.4,.04,.03],[21,.02,.01],[21.4,.03,.05],[21.9,.04,.03]]);
s("#ff8000",[[9.4,.04,.07],[9.9,.04,.05]]);
s("#ff8000",[[10,.03,.01],[12,.02,.01],[14,.04,.03]]);
s("#ff8000",[[14,.08,.06],[14.28,.08,.06]],[[14.12,.32],[14.25,.27],[14.2,.17],[14.04,.17]],2.5);
s("#ff6000",[[11.45,.07,.08],[12.5,.07,.06],[13,.05,.06],[13.1,.08,.04]],[[13.02,.15]],2.5);
s("#ff6000",[[0,.06,.02],[.35,.06,.02]]);
s("#ff6000",[[15.8,.04,.04],[16.07,.07,.07]],[[16.05,.19],[15.95,.14]]);
s("#ff4000",[[8.7,.08,.07],[9,.07,.05],[9.3,.04,.02]],[[8.75,.13],[8.88,.14]],2.5);
s("#ff2000",[[2,.02,.01],[5,.01,.008],[6.15,.02,.02]]);
s("#ff2000",[[17.5,.025,.01],[19.5,.03,.02],[20,.05,.05],[20.55,.06,.05]],[[20.15,.12]],2.5);
s("#bf0000",[[.61,.08,.03],[1.5,.04,.02],[1.9,.02,.01],[4,.025,.01]],null,2.5);
s("#bf0000",[[7.3,.03,.01],[7.5,.09,.03],[7.8,.04,.02],[8.8,.015,.005],[10.5,.02,.01]],null,2.5);
s("#bf0000",[[15.8,.03,.02],[17.5,.03,.02]],[[15.9,.06]]);
s("#9f0000",[[9.9,.05,.03],[10.55,.03,.02],[10.65,.03,.02]],[[10.6,.15]],2.5);
s("#9f0000",[[11.7,.07,.08],[12.5,.07,.06]],null,2.8);
s("#bf0000",[[17.3,.05,.07],[18.5,.07,.09],[18.55,.1,.1],[19,.1,.1],[19.05,.1,.1]],[[18.66,.233],[18.72,.21],[18.92,.2],[19.05,.237]],2.8);
s("#9f0000",[[22.4,.02,.01],[24,.02,.01]],null,2.5);

/* ---- sigma ---- */
g("#0000a0",[[0,.02,.03],[.3,.02,.02],[1.5,.01,.01],[5.25,.01,.005],[7.4,.005,.003]],[[.08,.22]]);
g("#0000bf",[[9.4,.02,.03],[10,.04,.06],[10.4,.05,.1],[11.3,.05,.1],[11.5,.03,.01]],[[11.02,.15]],2.5);
g("#0000bf",[[11.8,.05,.15],[12.3,.05,.15]],[[12.25,.28]]);
g("#0000bf",[[20.8,.01,.01],[22,.02,.01],[22.4,.03,.05],[23,.03,.05]],[[22.67,.15],[22.8,.13]]);
g("#0000ff",[[7.4,.05,.05],[7.9,.02,.02],[8.5,.01,.01]],[[7.65,.09]]);
g("#0000ff",[[10,.03,.1],[10.4,.03,.06]],[[10.18,.13]]);
g("#0000ff",[[11.9,.08,.15],[12.1,.08,.15]],[[11.97,.3]]);
g("#0000ff",[[16.9,.05,.1],[17.5,.08,.13],[18,.04,.06],[18.5,.04,.03]],[[16.95,.2],[17.42,.41],[17.38,.4]],2.5);
g("#0000ff",[[18.5,.02,.05],[19.2,.05,.1],[19.7,.04,.06],[20.7,.03,.05],[20.8,.01,.01]],[[19.39,.29],[19.5,.24],[20.32,.15]],2.5);
g("#0000ff",[[23.7,.03,.03],[23.9,.12,.1],[24,.1,.1]],[[23.92,.7],[23.95,.6]],3);
g("#0040ff",[[14.2,.04,.05],[14.6,.03,.05],[15,.02,.01]],[[14.24,.52],[14.32,.15],[14.45,.63]],2.5);
g("#0080ff",[[11.1,.05,.1],[11.4,.1,.15],[11.6,.04,.06]],[[11.32,.35],[11.27,.25]],2.5);
g("#0080ff",[[11.85,.08,.15],[12.3,.05,.08]],[[12.1,.35],[11.95,.28]],2.5);
g("#0080ff",[[13.1,.08,.1],[13.45,.1,.1],[13.6,.03,.03]],[[13.24,.46],[13.31,.36]],2.8);
g("#0080ff",[[19.1,.04,.08],[19.4,.06,.1],[19.7,.04,.05]],[[19.25,.17],[19.65,.25]],2.5);
g("#00bfff",[[0,.05,.14],[.3,.04,.1],[1,.03,.04],[1.4,.06,.06],[2,.06,.03],[4.2,.06,.03]],[[.27,.28],[1.03,.23],[1.12,.2],[1.2,.2],[.47,.15],[.55,.13]],2.5);
g("#00bfff",[[16.6,.03,.06],[17.4,.07,.15],[18,.05,.03],[18.6,.06,.03]],[[16.74,.17],[17.4,.3],[18.47,.15],[18.6,.15]],2.5);
g("#00dfff",[[13.5,.05,.04],[14.5,.04,.05],[14.9,.08,.25],[15,.04,.03]],[[14.7,.56],[14.85,.53],[14.75,.4]],2.5);
g("#00dfff",[[12.5,.03,.06],[13,.07,.08]],[[12.83,.5],[12.8,.38]],2.5);
g("#20ffdf",[[10,.04,.06],[10.3,.06,.07],[10.4,.05,.12]],[[10.38,.28]]);
g("#20ffdf",[[22,.02,.03],[22.5,.04,.06],[23,.02,.03],[23.6,.04,.09],[24,.05,.1]],[[22.4,.09],[23.98,.53]]);
g("#60ff9f",[[7.9,.04,.07],[8.5,.02,.03]],[[8.2,.13],[8.1,.1]],2.8);
g("#dfff20",[[.83,.12,.05],[1.4,.04,.05],[2,.04,.08],[3,.03,.03],[5.9,.05,.03]],[[.83,.17],[1,.15],[1.85,.11]]);
g("#dfff20",[[15.5,.05,.05],[18.3,.05,.06]],[[17.9,.13]]);
g("#ffdf00",[[3.4,.03,.01],[6,.015,.005],[9,.005,.002]]);
g("#ffdf00",[[19.5,.01,.01],[21.9,.015,.01]]);
g("#ff8000",[[12.55,.05,.1],[13,.08,.1],[13.15,.05,.05],[13.5,.02,.02],[14.5,.02,.02]],[[12.6,.4],[12.7,.42],[12.76,.25],[13.05,.36],[13.1,.3]],2.8);
g("#ff8000",[[14.6,.1,.15],[14.92,.12,.15],[15,.05,.03]],[[14.68,.2],[14.82,.38],[14.87,.35],[14.92,.26]],2.8);
g("#ff8000",[[23.85,.05,.08],[24,.05,.08]],[[23.94,.38]]);
g("#ff6000",[[0,.12,.06],[.35,.07,.06]],[[.02,.2],[.08,.18]],2.8);
g("#ff6000",[[15,.06,.04],[15.5,.02,.02]]);
g("#ff6000",[[15.7,.02,.02],[15.85,.02,.02]],[[15.77,.15]]);
g("#ff4000",[[11.45,.03,.05],[11.7,.12,.1],[12.2,.16,.12],[12.5,.04,.04]],[[11.8,.25],[11.95,.27],[12.05,.22]],2.8);
g("#ff2000",[[2,.01,.005],[6.15,.008,.004],[8.7,.008,.004],[12.4,.01,.005]]);
g("#ff2000",[[17.5,.01,.005],[20.5,.012,.01]]);
g("#bf0000",[[.61,.05,.05],[1.5,.02,.01],[4,.012,.006]],[[.93,.11],[1.1,.09]],2.5);
g("#bf0000",[[15.56,.02,.03],[19,.012,.01]],[[17.15,.28],[16.5,.06]],2.5);
g("#9f0000",[[7.34,.008,.005],[12.4,.01,.005]]);
g("#9f0000",[[22.44,.02,.04],[23.7,.02,.03],[24,.04,.07]],[[22.8,.12],[22.55,.07]],2.5);
})();
</script>
</body></html>
